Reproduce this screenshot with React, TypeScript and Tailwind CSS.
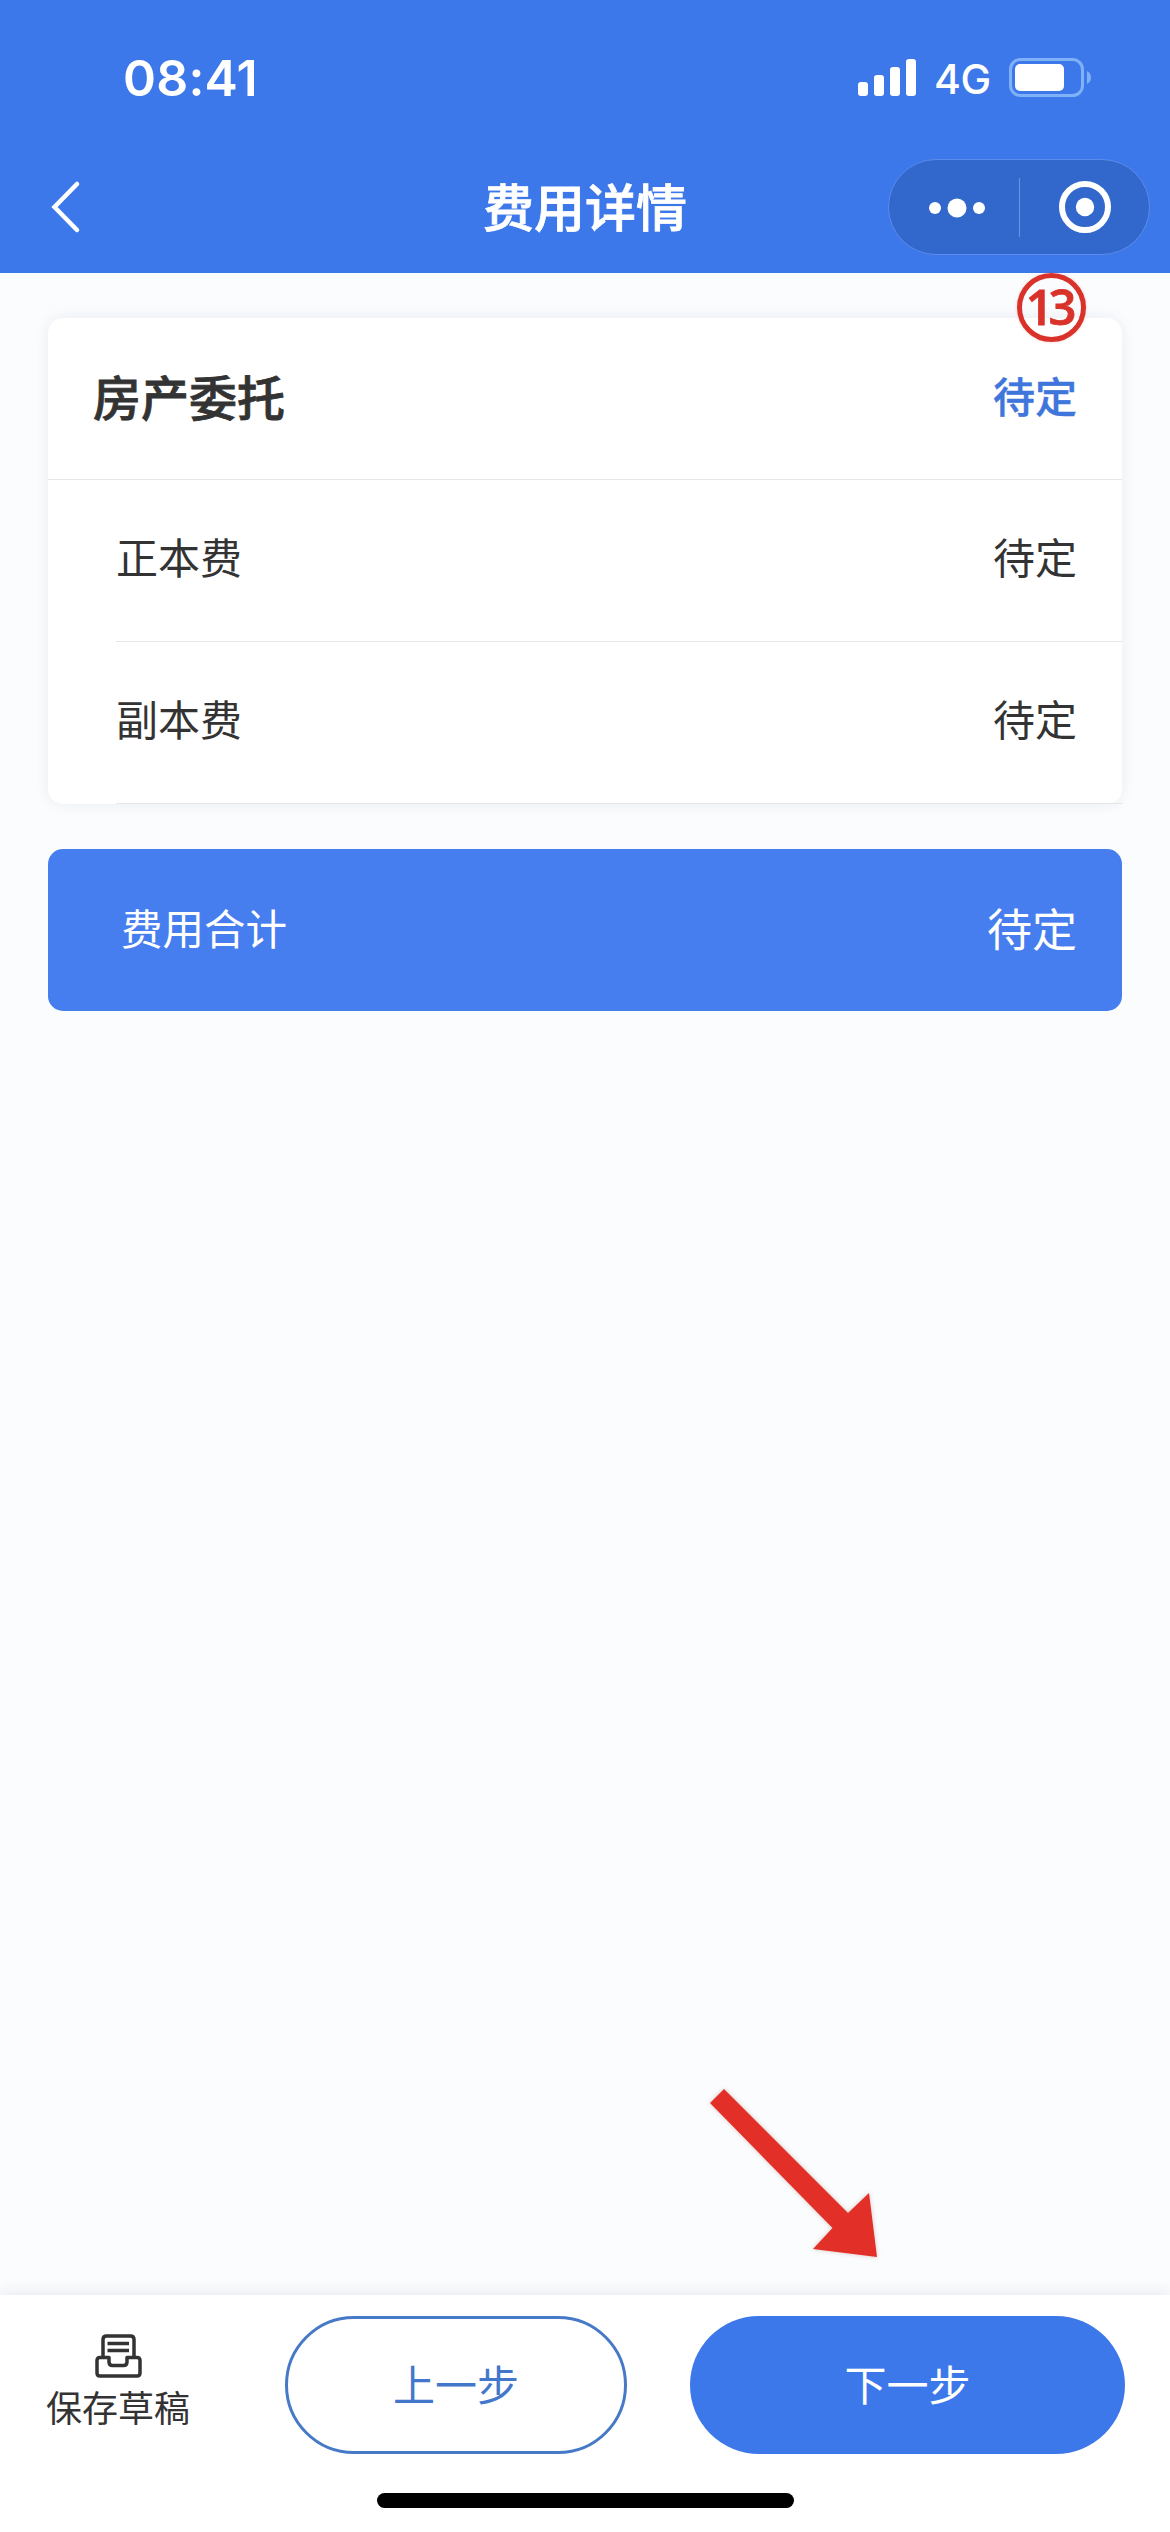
const items = [
  { name: "正本费", value: "待定" },
  { name: "副本费", value: "待定" },
];

function StatusBar() {
  return (
    <div className="flex h-[141px] items-start justify-between pt-[52px] pr-[78px] pl-[123px] text-white">
      <span className="font-['Inter'] text-[50px] leading-[52px] font-semibold tracking-[0.2px]">08:41</span>
      <div className="flex items-start">
        <div className="flex h-[44px] items-end gap-[6px]">
          <span className="h-[14px] w-[10px] rounded-[3px] bg-white" />
          <span className="h-[21px] w-[10px] rounded-[3px] bg-white" />
          <span className="h-[29px] w-[10px] rounded-[3px] bg-white" />
          <span className="h-[37px] w-[10px] rounded-[3px] bg-white" />
        </div>
        <span className="ml-[18px] w-[75px] pt-[2px] font-['Inter'] text-[41px] leading-[50px] font-medium tracking-[-0.5px]">4G</span>
        <svg width="83" height="39" viewBox="0 0 83 39" className="mt-[6px]">
          <rect x="1.5" y="1.5" width="72" height="36" rx="10" fill="none" stroke="#7fb1f8" strokeWidth="3" />
          <rect x="6" y="6" width="49" height="27" rx="5" fill="#fff" />
          <path d="M78 13q4 2 4 6.500t-4 6.500z" fill="#7fb1f8" />
        </svg>
      </div>
    </div>
  );
}

function NavBar() {
  return (
    <div className="relative flex h-[132px] items-center justify-center text-white">
      <svg width="32" height="54" viewBox="0 0 32 54" className="absolute top-[39px] left-[50px]">
        <path d="M27 4L4.500 27L27 50" fill="none" stroke="#fff" strokeWidth="4.500" strokeLinecap="round" />
      </svg>
      <h1 className="pb-1 text-[51px] leading-none font-medium [-webkit-text-stroke:0.8px_#fff]">费用详情</h1>
      <div className="absolute top-[18px] right-5 flex h-24 w-[262px] items-center rounded-full border border-[#5c8bea] bg-[#3268cc]">
        <svg width="260" height="94" viewBox="0 0 260 94">
          <circle cx="46" cy="48" r="6" fill="#fff" />
          <circle cx="68" cy="48" r="9.500" fill="#fff" />
          <circle cx="90" cy="48" r="6" fill="#fff" />
          <path d="M130.500 18V77" stroke="#6690e0" strokeWidth="1.200" />
          <circle cx="196" cy="47" r="23" fill="none" stroke="#fff" strokeWidth="6" />
          <circle cx="196" cy="47" r="9.200" fill="#fff" />
        </svg>
      </div>
    </div>
  );
}

function FeeCard() {
  return (
    <section className="relative rounded-[15px] bg-white shadow-[0_0_14px_rgba(40,50,80,0.08)]">
      <div className="flex h-[162px] items-center justify-between border-b border-[#e6e6e8] pr-[45px] pb-[7px] pl-[45px]">
        <h2 className="text-[48px] leading-none font-medium [-webkit-text-stroke:0.8px_#333]">房产委托</h2>
        <span className="text-[42px] leading-none font-medium text-[#3f76dc] [-webkit-text-stroke:0.4px_#3f76dc]">待定</span>
      </div>
      {items.map((item) => (
        <div key={item.name} className="ml-[68px] flex h-[162px] items-center justify-between border-b border-[#e6e6e8] pr-[45px] pb-[10px] text-[42px] leading-none last:border-[#eff0f2]">
          <span>{item.name}</span>
          <span>{item.value}</span>
        </div>
      ))}

      {/* Step number */}
      <div className="absolute -top-[45px] right-[36px] flex size-[69px] items-center justify-center rounded-full border-[5px] border-[#d9322a] font-['Open_Sans'] text-[49px] leading-none font-semibold tracking-[-5px] text-[#d9322a] shadow-[0_0_3px_rgba(217,50,42,0.25)]">
        <span className="-ml-[6px] pb-[2px] [-webkit-text-stroke:0.8px_#d9322a]">13</span>
      </div>
    </section>
  );
}

function DraftIcon() {
  return (
    <svg width="47" height="44" viewBox="0 0 47 44" fill="none" stroke="#333" strokeWidth="3.500" strokeLinejoin="round">
      <path d="M8 22V5.500q0-3.500 3.500-3.500H35.500q3.500 0 3.500 3.500V22" />
      <path d="M12.500 9.500H34M12.500 16.500H34" />
      <path d="M5 23.500H14V28q0 3.500 3.500 3.500H28.500q3.500 0 3.500-3.500V23.500H42q3 0 3 3V39q0 3-3 3H5q-3 0-3-3V26.500q0-3 3-3z" />
    </svg>
  );
}

function Footer() {
  return (
    <footer className="relative flex h-[237px] flex-col bg-white shadow-[0_-2px_14px_rgba(40,50,80,0.09)]">
      <div className="flex pt-[21px]">
        <button className="flex w-[237px] flex-col items-center pt-[18px] text-[36px] leading-none">
          <DraftIcon />
          <span className="mt-[10px] -ml-px">保存草稿</span>
        </button>
        <button className="ml-12 h-[138px] w-[342px] rounded-full border-[3px] border-[#4679c6] pb-[4px] text-[42px] leading-none text-[#4377cb]">上一步</button>
        <button className="ml-[63px] h-[138px] w-[435px] rounded-full bg-[#3d78eb] pb-[4px] text-[42px] leading-none text-white">下一步</button>
      </div>
      <div className="mt-[39px] ml-[377px] h-[15px] w-[417px] rounded-full bg-black" />

      {/* Pointer to the next button */}
      <svg width="180" height="180" viewBox="0 0 180 180" className="absolute -top-[213px] left-[703px] drop-shadow-[0_0_2px_rgba(150,60,50,0.3)]">
        <path d="M21 7L145 131L166 111L174 175L110 167L129.500 146L7 21Z" fill="#e23028" />
      </svg>
    </footer>
  );
}

export default function App() {
  return (
    <div className="flex h-[2532px] w-[1170px] flex-col overflow-hidden bg-[#fafcfe] font-['Noto_Sans_CJK_SC',sans-serif] text-[#333]">
      <header className="h-[273px] bg-[#3d78eb]">
        <StatusBar />
        <NavBar />
      </header>
      <main className="flex flex-1 flex-col gap-[45px] px-12 pt-[45px]">
        <FeeCard />
        <div className="flex h-[162px] items-center justify-between rounded-[15px] bg-[#467eef] pr-[45px] pb-[5px] pl-[73px] leading-none text-white">
          <span className="text-[41.5px]">费用合计</span>
          <span className="text-[45px]">待定</span>
        </div>
      </main>
      <Footer />
    </div>
  );
}
